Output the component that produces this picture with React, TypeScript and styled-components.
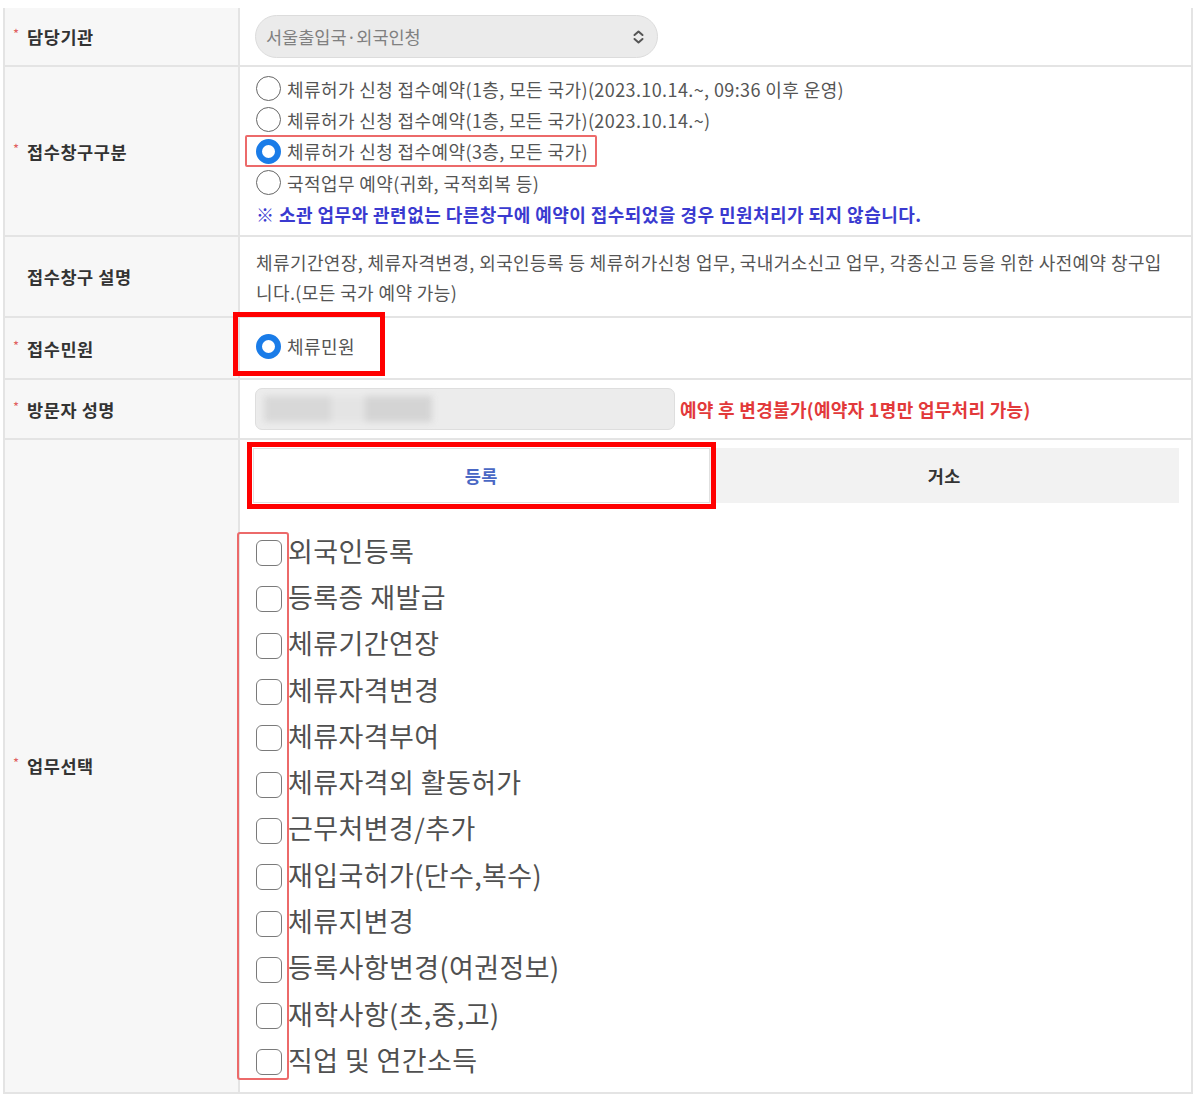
import React from 'react';
import styled, { createGlobalStyle } from 'styled-components';

const GlobalStyle = createGlobalStyle`
  body {
    margin: 0;
    background: #ffffff;
    font-family: 'Noto Sans CJK KR', 'Noto Sans', sans-serif;
    color: #555;
  }
`;

const colors = {
  line: '#e4e4e4',
  labelBg: '#f7f7f7',
  text: '#555555',
  label: '#333333',
  star: '#e06060',
  blue: '#3a3ad0',
  red: '#e2393a',
  radio: '#1a7ce8',
  mark: '#ff0000',
  markSoft: '#ec6a6a',
};

const WINDOWS = [
  { text: '체류허가 신청 접수예약(1층, 모든 국가)(2023.10.14.~, 09:36 이후 운영)' },
  { text: '체류허가 신청 접수예약(1층, 모든 국가)(2023.10.14.~)' },
  { text: '체류허가 신청 접수예약(3층, 모든 국가)', checked: true, marked: true },
  { text: '국적업무 예약(귀화, 국적회복 등)' },
];

const TASKS = [
  '외국인등록',
  '등록증 재발급',
  '체류기간연장',
  '체류자격변경',
  '체류자격부여',
  '체류자격외 활동허가',
  '근무처변경/추가',
  '재입국허가(단수,복수)',
  '체류지변경',
  '등록사항변경(여권정보)',
  '재학사항(초,중,고)',
  '직업 및 연간소득',
];

const Table = styled.div`
  margin: 8px 0 0 3px;
  width: 1190px;
  border-left: 2px solid ${colors.line};
  border-right: 2px solid ${colors.line};
  box-sizing: border-box;
`;

const Row = styled.div<{ $minHeight: number }>`
  display: grid;
  grid-template-columns: 235px 1fr;
  min-height: ${(p) => p.$minHeight}px;
  border-bottom: 2px solid ${colors.line};
  box-sizing: border-box;
`;

const LabelCell = styled.div`
  background: ${colors.labelBg};
  border-right: 2px solid ${colors.line};
  display: flex;
  align-items: center;
  padding-left: 8px;
  font-size: 17.5px;
  font-weight: 700;
  color: ${colors.label};
  letter-spacing: 0.6px;
`;

const Star = styled.span<{ $hidden?: boolean }>`
  display: inline-block;
  width: 14px;
  color: ${colors.star};
  font-size: 13px;
  font-weight: 400;
  margin-top: -6px;
  visibility: ${(p) => (p.$hidden ? 'hidden' : 'visible')};
`;

const ContentCell = styled.div<{ $align?: string }>`
  display: flex;
  flex-direction: column;
  justify-content: ${(p) => p.$align || 'center'};
  padding: 0 12px 0 16px;
  font-size: 18px;
  color: ${colors.text};
  letter-spacing: 0.4px;
`;

const Select = styled.div`
  width: 403px;
  height: 43px;
  margin-left: -1px;
  box-sizing: border-box;
  border-radius: 22px;
  background: #ebebeb;
  border: 1px solid #dcdcdc;
  display: flex;
  align-items: center;
  justify-content: space-between;
  padding: 0 12px 0 10px;
  color: #808080;
  font-size: 17.5px;
  letter-spacing: 0;
`;

const RadioList = styled.div`
  display: flex;
  flex-direction: column;
  padding: 6px 0 6px;
`;

const RadioLine = styled.label<{ $marked?: boolean }>`
  display: flex;
  align-items: center;
  gap: 6px;
  height: 31px;
  box-sizing: border-box;
  width: fit-content;
  ${(p) =>
    p.$marked &&
    `
    height: 32px;
    margin: 0 0 0 -11px;
    padding: 0 7px 0 9px;
    border: 2px solid ${colors.markSoft};
    border-radius: 2px;
  `}
`;

const Radio = styled.span<{ $checked?: boolean }>`
  width: 25px;
  height: 25px;
  border-radius: 50%;
  box-sizing: border-box;
  background: #fff;
  border: ${(p) => (p.$checked ? `6px solid ${colors.radio}` : '1.5px solid #666')};
  flex-shrink: 0;
`;

const Notice = styled.div`
  height: 31px;
  display: flex;
  align-items: center;
  color: ${colors.blue};
  font-weight: 700;
  letter-spacing: 0.45px;
  white-space: nowrap;
`;

const Description = styled.p`
  margin: 0;
  line-height: 30px;
  white-space: nowrap;
`;

const MarkedBox = styled.div`
  position: relative;
  z-index: 1;
  margin: -6px 0 -2px -23px;
  width: 152px;
  height: 64px;
  box-sizing: border-box;
  border: 5px solid ${colors.mark};
  display: flex;
  align-items: center;
  gap: 6px;
  padding: 4px 0 0 18px;
  align-self: flex-start;
`;

const NameLine = styled.div`
  display: flex;
  align-items: center;
  gap: 5px;
  white-space: nowrap;
`;

const NameInput = styled.div`
  width: 420px;
  height: 42px;
  margin-left: -1px;
  box-sizing: border-box;
  background: #ececec;
  border: 1px solid #dedede;
  border-radius: 7px;
  padding: 6px 8px;
  display: flex;
  align-items: center;
  flex-shrink: 0;
`;

const Redacted = styled.span`
  width: 168px;
  height: 26px;
  background: linear-gradient(90deg, #d8d8d8 0 40%, #e4e4e4 40% 60%, #d4d4d4 60% 100%);
  filter: blur(3px);
`;

const Warning = styled.span`
  color: ${colors.red};
  font-weight: 700;
  letter-spacing: 0.3px;
`;

const TabBar = styled.div`
  display: flex;
  margin: 8px 0 0 -3px;
  height: 55px;
`;

const Tab = styled.div<{ $active?: boolean; $grow: number }>`
  flex: ${(p) => p.$grow} 1 0;
  display: flex;
  align-items: center;
  justify-content: center;
  font-size: 17.5px;
  font-weight: 700;
  box-sizing: border-box;
  background: ${(p) => (p.$active ? '#ffffff' : '#f2f2f2')};
  color: ${(p) => (p.$active ? '#4a68c4' : '#333')};
  border: ${(p) => (p.$active ? '1px solid #e0e0e0' : 'none')};
  ${(p) => p.$active && `outline: 5px solid ${colors.mark}; outline-offset: 1px; position: relative; z-index: 1;`}
`;

const TaskList = styled.div`
  position: relative;
  margin: 24px 0 9px;
  display: flex;
  flex-direction: column;
`;

const TaskItem = styled.label`
  display: flex;
  align-items: center;
  gap: 6px;
  height: 46.3px;
  font-size: 27px;
  color: #505050;
  letter-spacing: 0.4px;
`;

const CheckBox = styled.span`
  width: 26px;
  height: 26px;
  box-sizing: border-box;
  border: 1.5px solid #7a7a7a;
  border-radius: 6px;
  background: #fff;
  flex-shrink: 0;
  margin-top: 6px;
`;

const ColumnMark = styled.div`
  position: absolute;
  left: -19px;
  top: 5px;
  width: 52px;
  height: 548px;
  box-sizing: border-box;
  border: 2px solid ${colors.markSoft};
  border-radius: 3px;
  pointer-events: none;
`;

const Chevrons = () => (
  <svg width="13" height="16" viewBox="0 0 13 16" fill="none" stroke="#555" strokeWidth="2" strokeLinecap="round" strokeLinejoin="round">
    <path d="M2.5 6 L6.5 2.5 L10.5 6" />
    <path d="M2.5 10 L6.5 13.5 L10.5 10" />
  </svg>
);

const Label = ({ children, required = true }: { children: React.ReactNode; required?: boolean }) => (
  <LabelCell>
    <Star $hidden={!required}>*</Star>
    {children}
  </LabelCell>
);

export default function App() {
  return (
    <>
      <GlobalStyle />
      <Table>
        <Row $minHeight={59}>
          <Label>담당기관</Label>
          <ContentCell>
            <Select>
              서울출입국·외국인청
              <Chevrons />
            </Select>
          </ContentCell>
        </Row>

        <Row $minHeight={170}>
          <Label>접수창구구분</Label>
          <ContentCell>
            <RadioList>
              {WINDOWS.map((w) => (
                <RadioLine key={w.text} $marked={w.marked}>
                  <Radio $checked={w.checked} />
                  {w.text}
                </RadioLine>
              ))}
              <Notice>※ 소관 업무와 관련없는 다른창구에 예약이 접수되었을 경우 민원처리가 되지 않습니다.</Notice>
            </RadioList>
          </ContentCell>
        </Row>

        <Row $minHeight={81}>
          <Label required={false}>접수창구 설명</Label>
          <ContentCell>
            <Description>
              체류기간연장, 체류자격변경, 외국인등록 등 체류허가신청 업무, 국내거소신고 업무, 각종신고 등을 위한 사전예약 창구입
              <br />
              니다.(모든 국가 예약 가능)
            </Description>
          </ContentCell>
        </Row>

        <Row $minHeight={62}>
          <Label>접수민원</Label>
          <ContentCell $align="flex-start">
            <MarkedBox>
              <Radio $checked />
              체류민원
            </MarkedBox>
          </ContentCell>
        </Row>

        <Row $minHeight={60}>
          <Label>방문자 성명</Label>
          <ContentCell>
            <NameLine>
              <NameInput>
                <Redacted />
              </NameInput>
              <Warning>예약 후 변경불가(예약자 1명만 업무처리 가능)</Warning>
            </NameLine>
          </ContentCell>
        </Row>

        <Row $minHeight={651}>
          <Label>업무선택</Label>
          <ContentCell $align="flex-start">
            <TabBar>
              <Tab $active $grow={455}>등록</Tab>
              <Tab $grow={470}>거소</Tab>
            </TabBar>
            <TaskList>
              <ColumnMark />
              {TASKS.map((t) => (
                <TaskItem key={t}>
                  <CheckBox />
                  {t}
                </TaskItem>
              ))}
            </TaskList>
          </ContentCell>
        </Row>
      </Table>
    </>
  );
}
